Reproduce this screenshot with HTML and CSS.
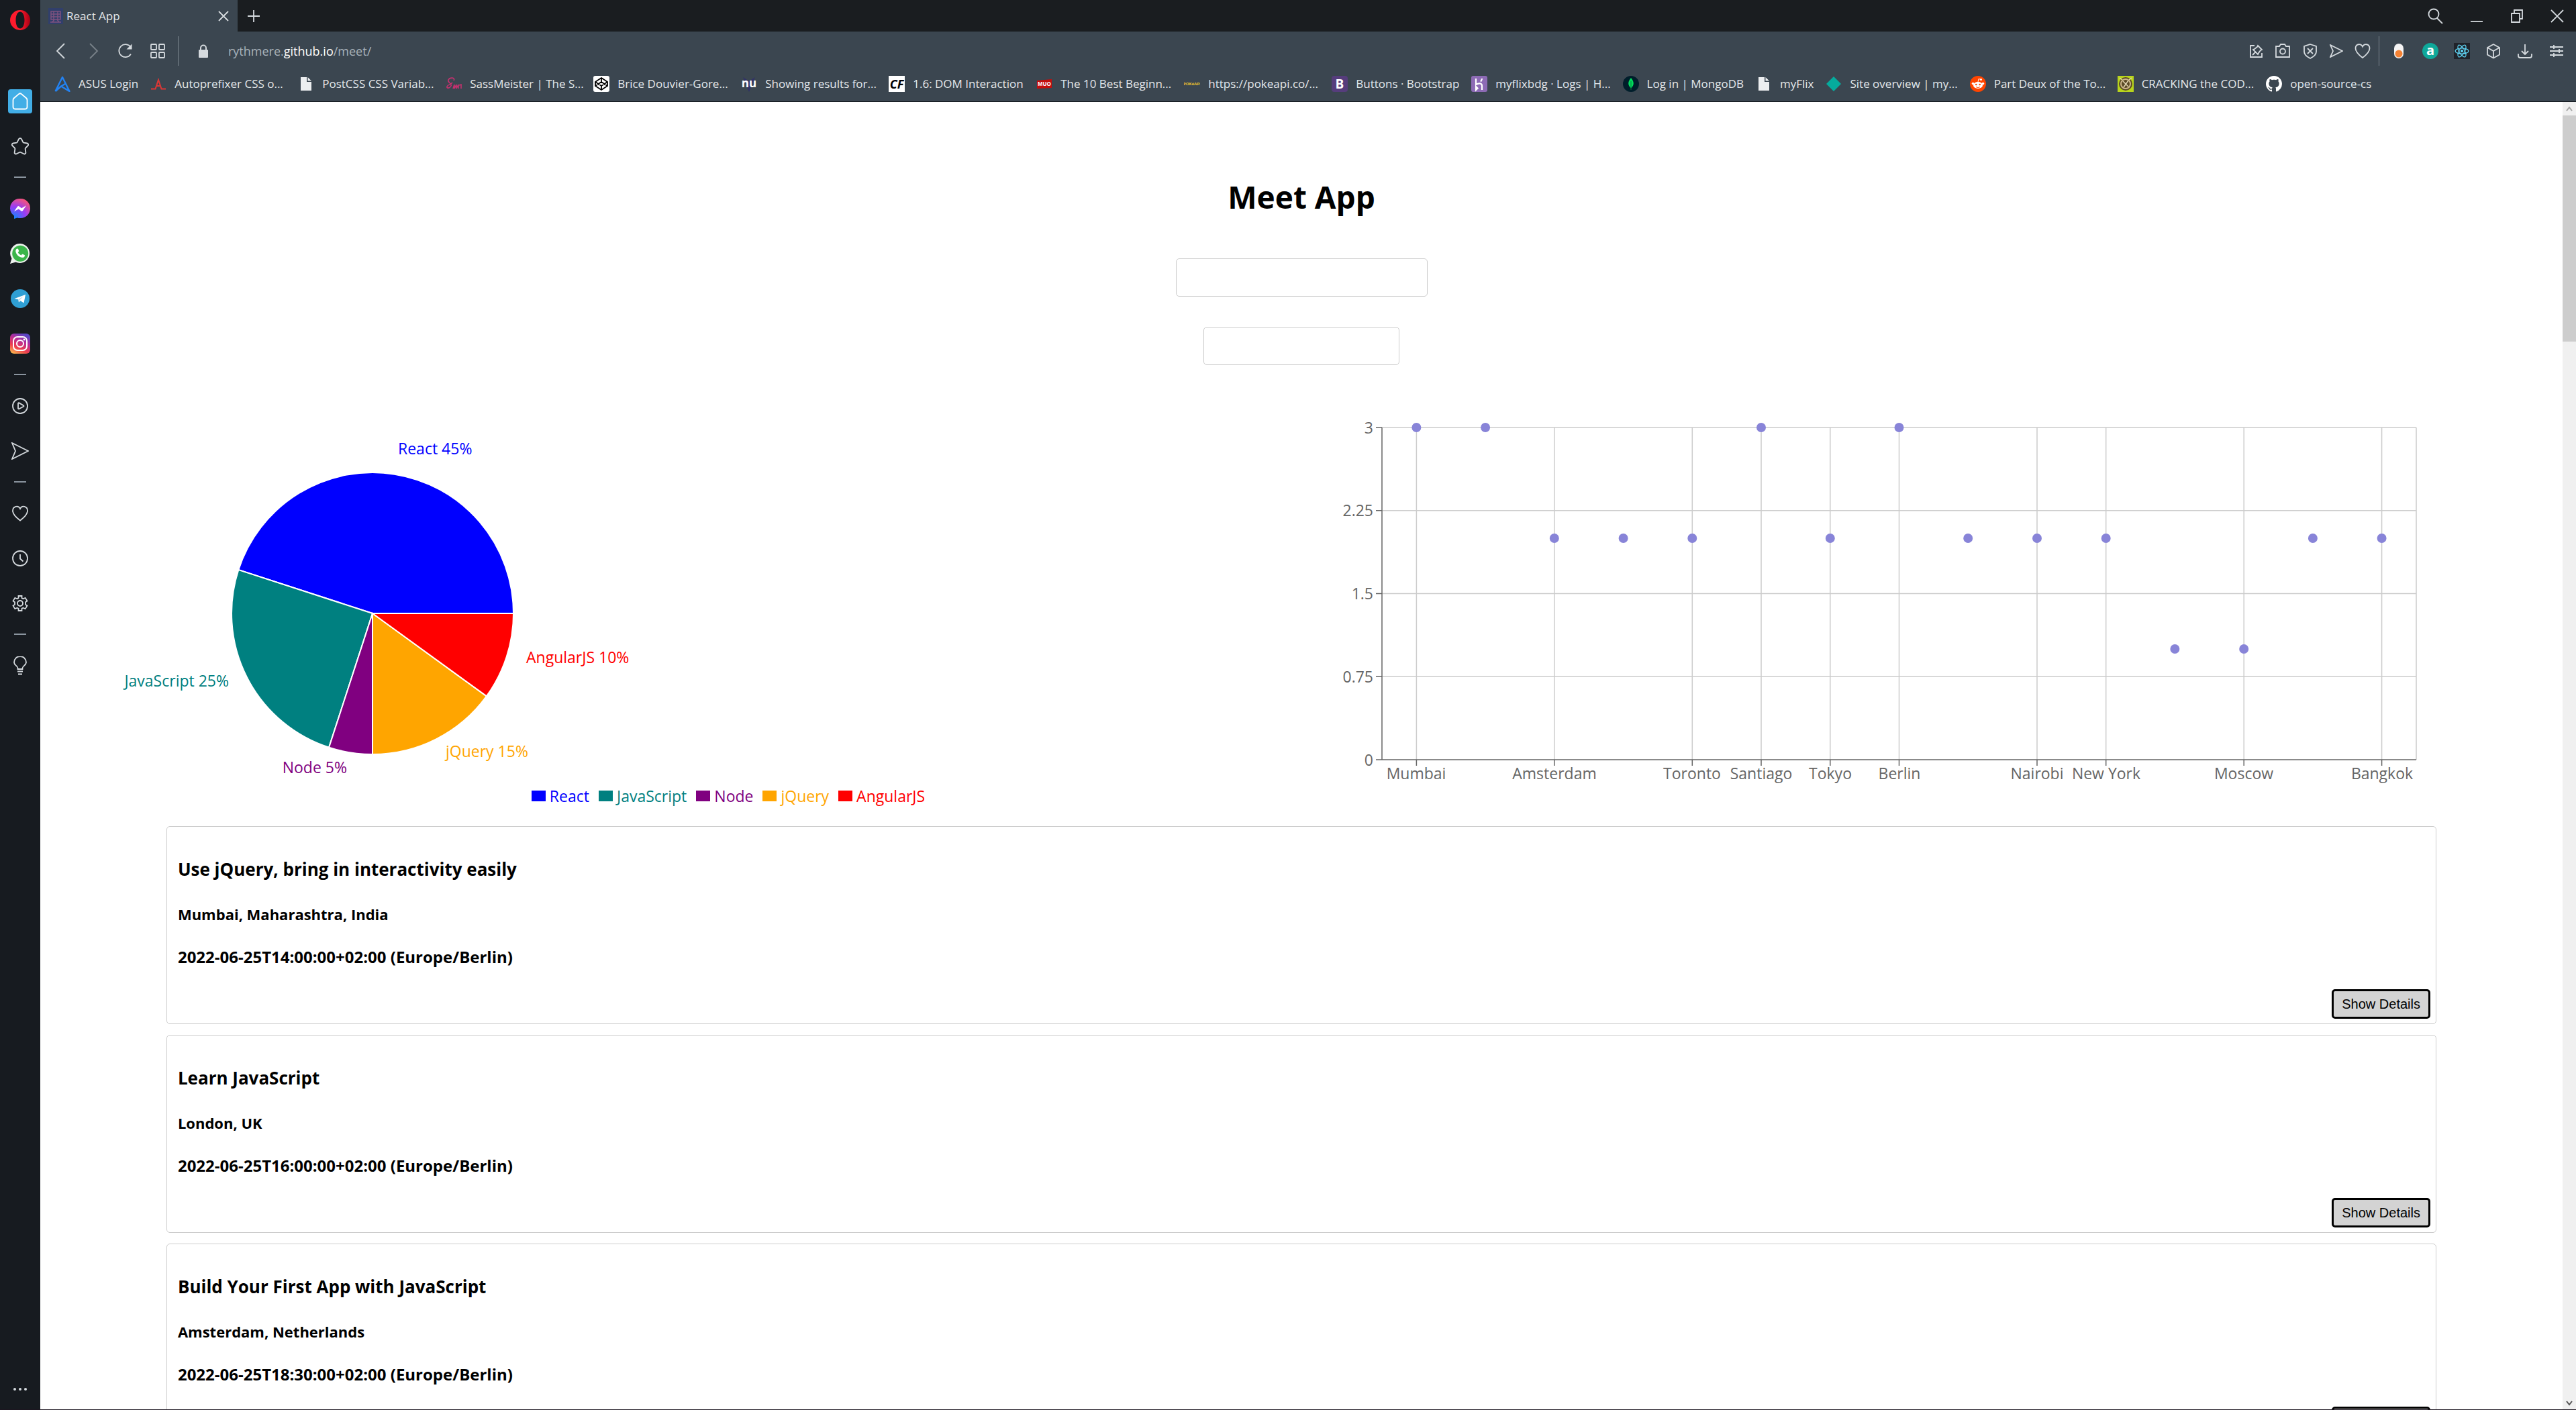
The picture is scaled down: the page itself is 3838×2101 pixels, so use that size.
FILE: index.html
```html
<!DOCTYPE html>
<html lang="en">
<head>
<meta charset="utf-8">
<title>React App</title>
<link rel="stylesheet" href="styles.css">
</head>
<body>
<div class="window">
  <nav class="sidebar" aria-label="Browser sidebar">
    <button class="side-logo" aria-label="Opera menu">
      <svg class="i30" viewBox="0 0 30 30"><defs><linearGradient id="op" x1="0" x2="1"><stop offset=".5" stop-color="#ff1b2d"/><stop offset="1" stop-color="#a70014"/></linearGradient></defs><path fill="url(#op)" fill-rule="evenodd" d="M15 0a15 15 0 0 1 0 30a15 15 0 0 1 0-30zM15 2.500C11 2.500 8.500 8 8.500 15S11 27.500 15 27.500S21.500 22 21.500 15S19 2.500 15 2.500z"/></svg>
    </button>
    <button class="side-btn" aria-label="Home">
      <svg class="i36" viewBox="0 0 36 36"><rect width="36" height="36" rx="4" fill="#42aee6"/><path d="M7.500 16c0-1 .5-2 1.300-2.700l7.200-6.200a3 3 0 0 1 4 0l7.200 6.200c.8.7 1.300 1.700 1.300 2.700v10.500a3 3 0 0 1-3 3h-15a3 3 0 0 1-3-3z" fill="none" stroke="#fff" stroke-width="1.800"/></svg>
    </button>
    <button class="side-btn" aria-label="Bookmarks">
      <svg class="i30 line" viewBox="0 0 30 30"><path d="M13 4.200c.8-1.600 3.200-1.600 4 0l2.300 4.700c.2.400.6.600 1 .7l5.200.9c1.700.3 2.300 2.300 1.100 3.500l-3.600 3.700c-.3.300-.4.700-.4 1.200l.8 5.200c.3 1.700-1.500 2.900-3 2.100l-4.500-2.200a2 2 0 0 0-1.800 0l-4.500 2.200c-1.500.8-3.300-.4-3-2.100l.8-5.200c0-.500-.100-.9-.4-1.200L3.400 14c-1.200-1.200-.600-3.200 1.100-3.500l5.200-.9c.4-.100.8-.3 1-.7z"/></svg>
    </button>
    <span class="side-sep"></span>
    <button class="side-btn" aria-label="Messenger">
      <svg class="i30" viewBox="0 0 30 30"><defs><radialGradient id="ms" cx=".2" cy="1" r="1.100"><stop offset="0" stop-color="#0a8cff"/><stop offset=".55" stop-color="#9a3cf5"/><stop offset="1" stop-color="#fb5575"/></radialGradient></defs><path fill="url(#ms)" d="M15 0a14.500 14.500 0 0 1 15 14.500A14.500 14.500 0 0 1 15 29c-1.500 0-3-.2-4.300-.6L6 30v-4.500A14.500 14.500 0 0 1 0 14.500A14.500 14.500 0 0 1 15 0z"/><path fill="#fff" d="M6 19l5.200-7.600 1.600-.4 4.300 3.200 6.900-3.900-5.200 8-1.800.4-4.200-3.200z"/></svg>
    </button>
    <button class="side-btn" aria-label="WhatsApp">
      <svg class="i30" viewBox="0 0 30 30"><path fill="#eef2ee" d="M15.300 0a14.500 14.500 0 1 1-6.900 27.600L0 30l2.500-7.800A14.500 14.500 0 0 1 15.300 0z"/><circle cx="15.200" cy="14.700" r="12" fill="#3bb54a"/><path fill="#fff" d="M10.500 7.500c.6-.2 1.300 0 1.500.6l1 2.500c.2.5 0 1-.300 1.300l-1 1.200c1 2 2.600 3.500 4.800 4.400l1.300-1.400c.3-.4.8-.5 1.200-.3l2.500 1.200c.5.3.6.8.4 1.400-.6 1.700-2 2.600-3.600 2.400-5.500-.7-9.600-5-10-9.600-.1-1.600.8-3.100 2.200-3.700z"/></svg>
    </button>
    <button class="side-btn" aria-label="Telegram">
      <svg class="i28" viewBox="0 0 28 28"><circle cx="14" cy="14" r="14" fill="#2f9fd4"/><path fill="#fff" d="M5.500 14L22 8l-2.500 12.500-5-3.300-2.500 2.300-.700-4.200z"/><path fill="#b8d4e4" d="M11.300 15.300L19 10.500l-6 5.800-1 3.200z"/></svg>
    </button>
    <button class="side-btn" aria-label="Instagram">
      <svg class="i30" viewBox="0 0 30 30"><defs><linearGradient id="ig" x1=".1" y1="1" x2=".6" y2="0"><stop offset="0" stop-color="#fdc34f"/><stop offset=".35" stop-color="#ee3e4d"/><stop offset=".7" stop-color="#b52c9a"/><stop offset="1" stop-color="#5b46c4"/></linearGradient></defs><rect width="30" height="30" rx="6" fill="url(#ig)"/><g fill="none" stroke="#fff" stroke-width="2"><rect x="5" y="5" width="20" height="20" rx="6"/><circle cx="15" cy="15" r="5"/></g><circle cx="21" cy="9" r="1.400" fill="#fff"/></svg>
    </button>
    <span class="side-sep"></span>
    <button class="side-btn" aria-label="Player">
      <svg class="i24 line" viewBox="0 0 24 24"><circle cx="12" cy="12" r="11"/><path d="M9 8.200c0-.8.800-1.200 1.500-.8l6.500 3.800c.7.400.7 1.200 0 1.600l-6.500 3.400c-.7.400-1.500 0-1.500-.8z"/></svg>
    </button>
    <button class="side-btn" aria-label="My Flow">
      <svg class="i26 line" viewBox="0 0 26 26"><path d="M1 1l24 12L1 25l5-12z"/></svg>
    </button>
    <span class="side-sep"></span>
    <button class="side-btn" aria-label="Favourites">
      <svg class="i24 line" viewBox="0 0 24 24"><path d="M12 22.500C8 19.500 1 14.500 1 8C1 1 9.500-.5 12 5C14.500-.5 23 1 23 8C23 14.500 16 19.500 12 22.500z"/></svg>
    </button>
    <button class="side-btn" aria-label="History">
      <svg class="i24 line" viewBox="0 0 24 24"><circle cx="12" cy="12" r="11"/><path d="M12 6v6.500l4.500 4"/></svg>
    </button>
    <button class="side-btn" aria-label="Settings">
      <svg class="i24 line" viewBox="0 0 24 24"><path d="M9.500 1h5v3.200l2 1.100 3.200-1.500 2.800 4.600-2.500 1.900v3.400l2.500 1.900-2.800 4.600-3.200-1.500-2 1.100V23h-5v-3.200l-2-1.100-3.200 1.500-2.800-4.600L4 13.700v-3.400L1.500 8.400l2.800-4.600 3.200 1.500 2-1.100z"/><circle cx="12" cy="12" r="4"/></svg>
    </button>
    <span class="side-sep"></span>
    <button class="side-btn" aria-label="Tips">
      <svg class="i28 line" viewBox="0 0 28 28"><path d="M10.500 19v-1.500C10.500 14 5 13.500 5 9a9 9 0 0 1 18 0c0 4.500-5.500 5-5.500 8.500V19zM10 22.500h8M11 26.500h6"/></svg>
    </button>
    <button class="side-more" aria-label="Sidebar setup">
      <svg class="i24" viewBox="0 0 24 24" fill="#d5dade"><circle cx="4" cy="12" r="2"/><circle cx="12" cy="12" r="2"/><circle cx="20" cy="12" r="2"/></svg>
    </button>
  </nav>

  <div class="browser">
    <header class="chrome">
      <div class="tabs">
        <div class="tab">
          <svg class="i24" viewBox="0 0 24 24"><rect x="1" width="22" height="24" fill="#313f6b"/><path d="M5 5h14v12H5zM5 9h14M5 13h14M9 5v12M15 5v12M7 21l3-4M17 21l-3-4M4 21h16" fill="none" stroke="#7d527f" stroke-width="1.500"/></svg>
          <span class="tab-title">React App</span>
          <button class="plain" aria-label="Close tab"><svg class="i18 line" viewBox="0 0 18 18"><path d="M2 2l14 14M16 2L2 16"/></svg></button>
        </div>
        <button class="plain new-tab" aria-label="New tab"><svg class="i18 line" viewBox="0 0 18 18"><path d="M9 0v18M0 9h18"/></svg></button>
        <div class="win-controls">
          <button class="plain" aria-label="Search tabs"><svg class="i24 line" viewBox="0 0 24 24"><circle cx="10" cy="9" r="7.500"/><path d="M15 15l8 8"/></svg></button>
          <button class="plain" aria-label="Minimise"><svg class="i20 line" viewBox="0 0 20 20"><path d="M1 18h18"/></svg></button>
          <button class="plain" aria-label="Restore"><svg class="i20 line" viewBox="0 0 20 20"><path d="M2 6h12v13H2zM6 6V1h12v13h-4"/></svg></button>
          <button class="plain" aria-label="Close"><svg class="i20 line" viewBox="0 0 20 20"><path d="M1 1l18 18M19 1L1 19"/></svg></button>
        </div>
      </div>

      <div class="address">
        <div class="nav-buttons">
          <button class="plain" aria-label="Back"><svg class="i24 line" viewBox="0 0 24 24"><path d="M17 1L6 12l11 11"/></svg></button>
          <button class="plain dim" aria-label="Forward"><svg class="i24 line" viewBox="0 0 24 24"><path d="M7 1l11 11L7 23"/></svg></button>
          <button class="plain" aria-label="Reload"><svg class="i24 line" viewBox="0 0 24 24"><path d="M20 16.500A9.500 9.500 0 1 1 19.500 6"/><path d="M21.500 1.500v8h-8z" fill="#d5dade" stroke="none"/></svg></button>
          <button class="plain" aria-label="Speed dial"><svg class="i24 line" viewBox="0 0 24 24"><rect x="2" y="2" width="8" height="8" rx="1"/><rect x="14" y="2" width="8" height="8" rx="1"/><rect x="2" y="14" width="8" height="8" rx="1"/><rect x="14" y="14" width="8" height="8" rx="1"/></svg></button>
        </div>
        <span class="divider"></span>
        <button class="plain lock" aria-label="Site information"><svg class="i20" viewBox="0 0 20 20"><path d="M6 9V5.500a4 4 0 0 1 8 0V9" fill="none" stroke="#d5dade" stroke-width="2"/><rect x="3" y="8" width="14" height="12" rx="1" fill="#d5dade"/></svg></button>
        <p class="url">rythmere.<b>github.io</b>/meet/</p>
        <div class="page-tools">
          <button class="plain" aria-label="Pin"><svg class="i20 line" viewBox="0 0 20 20"><path d="M7 2H1v17h17v-6M12 2l6 6-2 1-3 4-1 2-7-7 2-1 4-3zM8.500 11.500L4 16"/></svg></button>
          <button class="plain" aria-label="Snapshot"><svg class="i24 line" viewBox="0 0 24 24"><path d="M2 5h5l2-3h6l2 3h5v16H2z"/><circle cx="12" cy="12.500" r="4"/></svg></button>
          <button class="plain" aria-label="Ad blocker"><svg class="i24 line" viewBox="0 0 24 24"><path d="M12 2l9 3v8c0 5-5 8-9 10c-4-2-9-5-9-10V5zM8 8l8 8M16 8l-8 8"/></svg></button>
          <button class="plain" aria-label="Send to My Flow"><svg class="i20 line" viewBox="0 0 20 20"><path d="M1 1l18 9L1 19l4-9z"/></svg></button>
          <button class="plain" aria-label="Save page"><svg class="i24 line" viewBox="0 0 24 24"><path d="M12 22C8 19 1.500 14 1.500 8C1.500 1.500 9.500 0 12 5.500C14.500 0 22.500 1.500 22.500 8C22.500 14 16 19 12 22z"/></svg></button>
        </div>
        <span class="divider"></span>
        <div class="extensions">
          <button class="plain" aria-label="Extension toggle"><svg class="i24" viewBox="0 0 24 24"><rect x="5" y="1" width="14" height="22" rx="7" fill="#f4f4f4"/><circle cx="12" cy="16" r="5.500" fill="#f58233"/></svg></button>
          <button class="plain" aria-label="Amino"><svg class="i24" viewBox="0 0 24 24"><circle cx="12" cy="12" r="12" fill="#0fa89a"/><text class="glyph" x="12" y="18" font-size="20" fill="#fff">a</text></svg></button>
          <button class="plain" aria-label="React developer tools"><svg class="i24" viewBox="0 0 24 24"><rect width="24" height="24" fill="#20232a"/><g fill="none" stroke="#61dafb" stroke-width="1.200"><ellipse cx="12" cy="12" rx="10" ry="4"/><ellipse cx="12" cy="12" rx="10" ry="4" transform="rotate(60 12 12)"/><ellipse cx="12" cy="12" rx="10" ry="4" transform="rotate(120 12 12)"/></g><circle cx="12" cy="12" r="2" fill="#61dafb"/></svg></button>
          <button class="plain" aria-label="Extensions"><svg class="i24 line" viewBox="0 0 24 24"><path d="M12 2l9 5v10.500L12 22.500l-9-5V7zM3 7l9 5 9-5M12 12v10"/></svg></button>
          <button class="plain" aria-label="Downloads"><svg class="i24 line" viewBox="0 0 24 24"><path d="M12 2v15M7 12l5 5 5-5M2 16v3a3 3 0 0 0 3 3h14a3 3 0 0 0 3-3v-3"/></svg></button>
          <button class="plain" aria-label="Easy setup"><svg class="i24 line" viewBox="0 0 24 24"><path d="M2 6h20M2 12h20M2 18h20M8 3v6M16 9v6M8 15v6"/></svg></button>
        </div>
      </div>

      <nav class="bookmarks" aria-label="Bookmarks bar">
        <a href="#"><svg class="i24" viewBox="0 0 24 24"><path d="M1.500 23L12 2l10.500 21L10 15.500l6-3.500M10 15.500L1.500 23" fill="none" stroke="#2383f3" stroke-width="2.400" stroke-linejoin="round"/></svg>ASUS Login</a>
        <a class="cut" href="#"><svg class="i24" viewBox="0 0 24 24"><path d="M1 19.500h6.500L12 6l4.500 13.500H23M9 15h6" fill="none" stroke="#dd3735" stroke-width="2"/></svg>Autoprefixer CSS o...</a>
        <a class="cut" href="#"><svg class="i24" viewBox="0 0 24 24"><path d="M4 2h9v7h7v13H4zM14.500 2L20 7.500h-5.500z" fill="#eceef0"/></svg>PostCSS CSS Variab...</a>
        <a class="cut" href="#"><svg class="i24" viewBox="0 0 24 24"><path d="M12 7c3-5-6-5-8-1s6 5 4 9-7 4-6 1 6-3 8-6M11 19l2-6v6l3-6v6l3-6v6M20 14l3-1v6" fill="none" stroke="#c6316f" stroke-width="1.600"/></svg>SassMeister | The S...</a>
        <a class="cut" href="#"><svg class="i24" viewBox="0 0 24 24"><rect width="24" height="24" rx="3" fill="#fff"/><path d="M12 3l9 6v6l-9 6-9-6V9zM3 9l9 6 9-6M3 15l9-6 9 6M12 3v6M12 15v6" fill="none" stroke="#000" stroke-width="1.800"/></svg>Brice Douvier-Gore...</a>
        <a class="cut" href="#"><svg class="i24" viewBox="0 0 24 24"><path d="M3 2l9 22 9-22-9 6z" fill="#303268"/><text class="glyph" x="12" y="17" font-size="17" fill="#fff">nu</text></svg>Showing results for...</a>
        <a class="cut" href="#"><svg class="i24" viewBox="0 0 24 24"><rect width="24" height="24" fill="#fff"/><text class="glyph slant" x="12" y="19" font-size="18" fill="#000">CF</text></svg>1.6: DOM Interaction</a>
        <a class="cut" href="#"><svg class="i24" viewBox="0 0 24 24"><path d="M1 7l22-2v13l-22 1z" fill="#c40d0d"/><text class="glyph" x="12" y="15" font-size="8" fill="#fff">MUO</text></svg>The 10 Best Beginn...</a>
        <a class="cut" href="#"><svg class="i24" viewBox="0 0 24 24"><text class="glyph" x="12" y="14" font-size="6" fill="#f0c52e">POKéAPI</text></svg>https://pokeapi.co/...</a>
        <a href="#"><svg class="i24" viewBox="0 0 24 24"><rect width="24" height="24" rx="4" fill="#563d7c"/><text class="glyph" x="12" y="19" font-size="19" fill="#fff">B</text></svg>Buttons · Bootstrap</a>
        <a href="#"><svg class="i24" viewBox="0 0 24 24"><rect width="24" height="24" rx="3" fill="#8d6bb5"/><path d="M7 4v9c4-2.500 9-2.500 9 2v6M16 4c0 2-1 3-2 4.500M7 16v5l2.500-2.500z" fill="none" stroke="#fff" stroke-width="2.200"/></svg>myflixbdg · Logs | H...</a>
        <a href="#"><svg class="i24" viewBox="0 0 24 24"><circle cx="12" cy="12" r="12" fill="#001e2b"/><path d="M12 3c5 6 5 11 0 15.500C7 14 7 9 12 3z" fill="#00dc5c"/><path d="M12 8v13" stroke="#00803c"/></svg>Log in | MongoDB</a>
        <a href="#"><svg class="i24" viewBox="0 0 24 24"><path d="M4 2h9v7h7v13H4zM14.500 2L20 7.500h-5.500z" fill="#eceef0"/></svg>myFlix</a>
        <a href="#"><svg class="i24" viewBox="0 0 24 24"><path d="M12 1l11 11-11 11L1 12z" fill="#05ab9d"/></svg>Site overview | my...</a>
        <a class="cut" href="#"><svg class="i24" viewBox="0 0 24 24"><circle cx="12" cy="12" r="12" fill="#ff4500"/><ellipse cx="12" cy="14" rx="7" ry="5" fill="#fff"/><circle cx="4.500" cy="11.500" r="1.800" fill="#fff"/><circle cx="19.500" cy="11.500" r="1.800" fill="#fff"/><circle cx="16.500" cy="5.500" r="1.500" fill="#fff"/><path d="M12 9l1-4.500 3 .8" fill="none" stroke="#fff"/><circle cx="9.300" cy="13" r="1.300" fill="#ff4500"/><circle cx="14.700" cy="13" r="1.300" fill="#ff4500"/><path d="M9 16.500c2 1.300 4 1.300 6 0" fill="none" stroke="#ff4500"/></svg>Part Deux of the To...</a>
        <a href="#"><svg class="i24" viewBox="0 0 24 24"><rect width="24" height="24" fill="#b8d41c"/><circle cx="12" cy="12" r="10" fill="#5b4a26"/><circle cx="12" cy="12" r="7" fill="none" stroke="#cdb68a" stroke-width="2"/><path d="M8 8l8 8M16 7l-7 10M3 3l4 3M21 3l-4 3" stroke="#e2d6b4" stroke-width="1.500"/></svg>CRACKING the COD...</a>
        <a href="#"><svg class="i24" viewBox="0 0 16 16"><path fill="#fff" d="M8 0C3.580 0 0 3.580 0 8c0 3.540 2.290 6.530 5.470 7.590.4.070.55-.17.55-.38 0-.19-.01-.82-.01-1.490-2.010.37-2.530-.49-2.690-.94-.09-.23-.48-.94-.82-1.130-.28-.15-.68-.52-.01-.53.63-.01 1.080.58 1.230.82.72 1.210 1.870.87 2.330.66.07-.52.28-.87.51-1.070-1.780-.2-3.640-.89-3.640-3.950 0-.87.31-1.590.82-2.150-.08-.2-.36-1.020.08-2.120 0 0 .67-.21 2.200.82.64-.18 1.320-.27 2-.27s1.360.09 2 .27c1.530-1.040 2.200-.82 2.200-.82.44 1.100.16 1.920.08 2.120.51.56.82 1.270.82 2.150 0 3.070-1.870 3.750-3.650 3.950.29.25.54.73.54 1.480 0 1.070-.01 1.930-.01 2.200 0 .21.15.46.55.38A8.010 8.010 0 0 0 16 8c0-4.420-3.580-8-8-8z"/></svg>open-source-cs</a>
      </nav>
    </header>

    <div class="viewport">
      <main class="app">
        <h1>Meet App</h1>
        <div class="search"><input class="city" type="text" aria-label="City"></div>
        <div class="search"><input class="count" type="text" aria-label="Number of events"></div>

        <section class="charts">
          <div class="genre">
            <svg class="chart" viewBox="0 0 1879 568" role="img" aria-label="Event genres">
              <g stroke="#fff" stroke-width="2">
                <path fill="blue" d="M495 314H705A210 210 0 0 0 295.300 249.100z"/>
                <path fill="teal" d="M495 314L295.300 249.100A210 210 0 0 0 430.100 513.700z"/>
                <path fill="purple" d="M495 314L430.100 513.700A210 210 0 0 0 495 524z"/>
                <path fill="orange" d="M495 314V524A210 210 0 0 0 664.900 437.400z"/>
                <path fill="red" d="M495 314L664.900 437.400A210 210 0 0 0 705 314z"/>
              </g>
              <g class="slice-label">
                <text x="533" y="77" fill="blue">React 45%</text>
                <text x="281" y="423" fill="teal" text-anchor="end">JavaScript 25%</text>
                <text x="457" y="552" fill="purple" text-anchor="end">Node 5%</text>
                <text x="604" y="528" fill="orange">jQuery 15%</text>
                <text x="724" y="388" fill="red">AngularJS 10%</text>
              </g>
            </svg>
            <ul class="legend">
              <li class="react">React</li>
              <li class="javascript">JavaScript</li>
              <li class="node">Node</li>
              <li class="jquery">jQuery</li>
              <li class="angular">AngularJS</li>
            </ul>
          </div>
          <svg class="chart" viewBox="0 0 1879 600" role="img" aria-label="Events per city">
            <path class="grid" d="M120 37H1661M120 160.800H1661M120 284.500H1661M120 408.300H1661M171.400 37V532M376.800 37V532M582.300 37V532M685 37V532M787.800 37V532M890.500 37V532M1096 37V532M1198.700 37V532M1404.200 37V532M1609.600 37V532M1661 37V532"/>
            <path class="axis" d="M120 37V532M111 532H1661M111 37h9M111 160.800h9M111 284.500h9M111 408.300h9M171.400 532v9M376.800 532v9M582.300 532v9M685 532v9M787.800 532v9M890.500 532v9M1096 532v9M1198.700 532v9M1404.200 532v9M1609.600 532v9"/>
            <g class="tick y">
              <text x="107" y="46">3</text><text x="107" y="169">2.25</text><text x="107" y="293">1.5</text><text x="107" y="417">0.75</text><text x="107" y="541">0</text>
            </g>
            <g class="tick x">
              <text x="171" y="561">Mumbai</text><text x="377" y="561">Amsterdam</text><text x="582" y="561">Toronto</text><text x="685" y="561">Santiago</text><text x="788" y="561">Tokyo</text><text x="891" y="561">Berlin</text><text x="1096" y="561">Nairobi</text><text x="1199" y="561">New York</text><text x="1404" y="561">Moscow</text><text x="1610" y="561">Bangkok</text>
            </g>
            <g fill="#8884d8">
              <circle cx="171.400" cy="37" r="7"/><circle cx="274.100" cy="37" r="7"/><circle cx="376.800" cy="202" r="7"/><circle cx="479.600" cy="202" r="7"/><circle cx="582.300" cy="202" r="7"/><circle cx="685" cy="37" r="7"/><circle cx="787.800" cy="202" r="7"/><circle cx="890.500" cy="37" r="7"/><circle cx="993.200" cy="202" r="7"/><circle cx="1096" cy="202" r="7"/><circle cx="1198.700" cy="202" r="7"/><circle cx="1301.400" cy="367" r="7"/><circle cx="1404.200" cy="367" r="7"/><circle cx="1506.900" cy="202" r="7"/><circle cx="1609.600" cy="202" r="7"/>
            </g>
          </svg>
        </section>

        <section class="events">
          <article class="event">
            <h2>Use jQuery, bring in interactivity easily</h2>
            <p class="place">Mumbai, Maharashtra, India</p>
            <p class="time">2022-06-25T14:00:00+02:00 (Europe/Berlin)</p>
            <button class="details">Show Details</button>
          </article>
          <article class="event">
            <h2>Learn JavaScript</h2>
            <p class="place">London, UK</p>
            <p class="time">2022-06-25T16:00:00+02:00 (Europe/Berlin)</p>
            <button class="details">Show Details</button>
          </article>
          <article class="event">
            <h2>Build Your First App with JavaScript</h2>
            <p class="place">Amsterdam, Netherlands</p>
            <p class="time">2022-06-25T18:30:00+02:00 (Europe/Berlin)</p>
            <button class="details">Show Details</button>
          </article>
        </section>
      </main>
      <div class="scrollbar" aria-hidden="true">
        <svg class="i20" viewBox="0 0 20 20"><path d="M6 13l4-5 4 5" fill="none" stroke="#a3a3a3" stroke-width="2"/></svg>
        <span class="thumb"></span>
        <svg class="i20" viewBox="0 0 20 20"><path d="M6 8l4 5 4-5" fill="none" stroke="#505050" stroke-width="2"/></svg>
      </div>
    </div>
  </div>
</div>
</body>
</html>
```
FILE: styles.css
```css
* { box-sizing: border-box; }

body {
  margin: 0;
  font-family: "Open Sans", "Noto Sans", sans-serif;
  background: #fff;
  color: #000;
}

h1, h2, p, ul { margin: 0; padding: 0; }

svg { display: block; flex: none; }

button {
  font: inherit;
  border: 0;
  padding: 0;
  background: none;
  cursor: pointer;
}

.window {
  display: flex;
  height: 100vh;
  overflow: hidden;
  border-bottom: 1px solid #1c1620;
}

/* icon sizes */
.i18 { width: 18px; height: 18px; }
.i20 { width: 20px; height: 20px; }
.i24 { width: 24px; height: 24px; }
.i26 { width: 26px; height: 26px; }
.i28 { width: 28px; height: 28px; }
.i30 { width: 30px; height: 30px; }
.i36 { width: 36px; height: 36px; }
.line { fill: none; stroke: #d5dade; stroke-width: 1.8; }
.glyph { font-family: "Open Sans", sans-serif; font-weight: 700; text-anchor: middle; }
.slant { font-style: italic; }

/* sidebar */
.sidebar {
  flex: none;
  width: 60px;
  display: flex;
  flex-direction: column;
  align-items: center;
  background: #171b20;
}
.side-logo { padding: 15px 0; margin-bottom: 57px; }
.side-btn {
  width: 60px;
  height: 67px;
  display: grid;
  place-items: center;
}
.side-sep {
  width: 18px;
  height: 26px;
  display: flex;
  align-items: center;
}
.side-sep::before {
  content: "";
  width: 18px;
  height: 2px;
  background: #8a949e;
}
.side-more { margin-top: auto; padding-bottom: 18px; }

/* window chrome */
.browser {
  flex: 1;
  min-width: 0;
  display: flex;
  flex-direction: column;
}
.chrome {
  flex: none;
  background: #3b4650;
  border-bottom: 1px solid #10151a;
  color: #e4e8eb;
}
.plain { display: block; color: inherit; }
.dim { opacity: .4; }

.tabs {
  display: flex;
  align-items: center;
  height: 47px;
  background: #1a1d20;
}
.tab {
  display: flex;
  align-items: center;
  gap: 4px;
  width: 294px;
  height: 47px;
  padding: 0 12px 0 11px;
  background: #3b4650;
  font-size: 17px;
}
.tab-title { flex: 1; }
.new-tab { margin-left: 15px; }
.win-controls {
  display: flex;
  align-items: center;
  gap: 40px;
  margin-left: auto;
  padding-right: 18px;
}

.address {
  display: flex;
  align-items: center;
  height: 58px;
}
.nav-buttons {
  display: flex;
  gap: 24px;
  padding: 0 18px 0 19px;
}
.divider {
  width: 1px;
  height: 44px;
  background: #7b858e;
}
.lock { margin: 0 27px; }
.url { font-size: 18px; color: #a9b3bb; }
.url b { font-weight: 400; color: #fff; }
.page-tools {
  display: flex;
  align-items: center;
  gap: 17px;
  margin-left: auto;
  padding-right: 12px;
}
.extensions {
  display: flex;
  align-items: center;
  gap: 23px;
  padding: 0 17px;
}

.bookmarks {
  display: flex;
  align-items: center;
  height: 46px;
  padding: 0 0 6px 21px;
  font-size: 17px;
  line-height: 24px;
  white-space: nowrap;
}
.bookmarks a {
  display: flex;
  align-items: center;
  gap: 12px;
  padding-right: 18px;
  color: inherit;
  text-decoration: none;
}
.bookmarks .cut { width: 220px; padding-right: 0; }

/* page */
.viewport {
  flex: 1;
  min-height: 0;
  display: flex;
}
.app {
  flex: 1;
  min-width: 0;
  overflow: hidden;
  padding-top: 109px;
}
h1 {
  margin-bottom: 60px;
  font-size: 46px;
  line-height: 64px;
  text-align: center;
}
.search {
  display: flex;
  justify-content: center;
  margin-bottom: 45px;
}
.search input {
  height: 57px;
  padding: 0 15px;
  border: 1px solid #ccc;
  border-radius: 5px;
  font: 20px "Liberation Sans", sans-serif;
}
.city { width: 375px; }
.count { width: 292px; }

/* charts */
.charts {
  display: grid;
  grid-template-columns: 1fr 1fr;
  align-items: start;
  margin: 56px 0 27px;
}
.chart { width: 100%; height: auto; }
.slice-label { font-size: 23px; }
.legend {
  display: flex;
  justify-content: center;
  gap: 14px;
  padding-left: 171px;
  list-style: none;
  font-size: 23px;
  line-height: 36px;
}
.legend li {
  display: flex;
  align-items: center;
  gap: 6px;
}
.legend li::before {
  content: "";
  width: 21px;
  height: 16px;
  background: currentColor;
}
.react { color: blue; }
.javascript { color: teal; }
.node { color: purple; }
.jquery { color: orange; }
.angular { color: red; }
.grid { fill: none; stroke: #ccc; stroke-width: 1.5; }
.axis { fill: none; stroke: #666; stroke-width: 1.5; }
.tick { font-size: 23px; fill: #666; }
.tick.x { text-anchor: middle; }
.tick.y { text-anchor: end; }

/* events */
.events {
  display: flex;
  flex-direction: column;
  gap: 16px;
  width: 90%;
  margin: 0 auto;
}
.event {
  display: flex;
  flex-direction: column;
  gap: 32px;
  padding: 44px 8px 7px 16px;
  border: 1px solid #ccc;
  border-radius: 5px;
}
.event h2 { font-size: 26px; line-height: 38px; }
.place, .time { font-weight: 700; line-height: 32px; }
.place { font-size: 22px; }
.time { font-size: 24px; }
.details {
  align-self: flex-end;
  width: 147px;
  height: 44px;
  border: 3px solid #000;
  border-radius: 5px;
  background: lightgrey;
  font: 20px "Liberation Sans", sans-serif;
  color: #000;
}

.scrollbar {
  flex: none;
  display: flex;
  flex-direction: column;
  width: 20px;
  background: #f0f0f0;
}
.thumb { height: 337px; background: #cdcdcd; margin-bottom: auto; }
```
